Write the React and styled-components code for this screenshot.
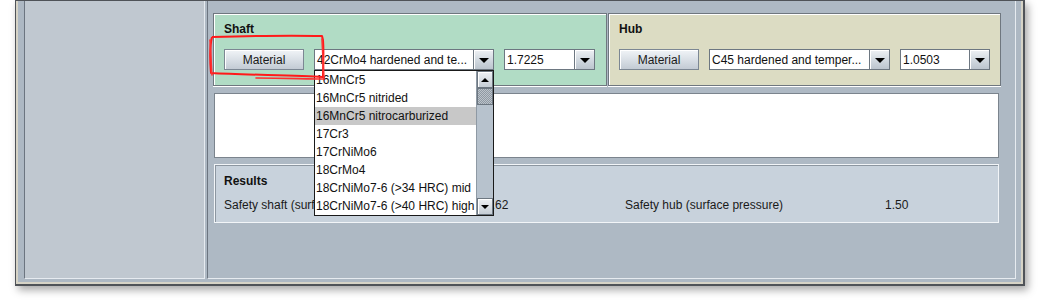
import React from "react";
import styled, { createGlobalStyle } from "styled-components";

const GlobalStyle = createGlobalStyle`
  html, body {
    margin: 0;
    padding: 0;
    background: #ffffff;
  }
  body {
    font-family: "Liberation Sans", Arial, sans-serif;
    font-size: 12px;
    color: #111;
  }
`;

const materials = [
  "16MnCr5",
  "16MnCr5 nitrided",
  "16MnCr5 nitrocarburized",
  "17Cr3",
  "17CrNiMo6",
  "18CrMo4",
  "18CrNiMo7-6 (>34 HRC) mid",
  "18CrNiMo7-6 (>40 HRC) high",
];

export default function App() {
  return (
    <>
      <GlobalStyle />
      <Stage>
        <Window>
          <Frame>
            <SidePanel />
            <MainArea>
              <PartsRow>
                <PartPanel $bg="#b1dcc5">
                  <PanelTitle>Shaft</PanelTitle>
                  <ControlRow>
                    <Button>Material</Button>
                    <ComboWrap>
                      <Combo $width={180} value="42CrMo4 hardened and te..." />
                      <Popup>
                        <ItemList>
                          {materials.map((m, i) => (
                            <Item key={m} $selected={i === 2}>
                              {m}
                            </Item>
                          ))}
                        </ItemList>
                        <ScrollBar>
                          <ScrollButton>
                            <UpTriangle />
                          </ScrollButton>
                          <Thumb />
                          <Track />
                          <ScrollButton>
                            <DownTriangle $small />
                          </ScrollButton>
                        </ScrollBar>
                      </Popup>
                    </ComboWrap>
                    <Combo $width={91} value="1.7225" />
                  </ControlRow>
                </PartPanel>
                <PartPanel $bg="#dcdcc3">
                  <PanelTitle>Hub</PanelTitle>
                  <ControlRow>
                    <Button>Material</Button>
                    <Combo $width={181} value="C45 hardened and temper..." />
                    <Combo $width={90} value="1.0503" />
                  </ControlRow>
                </PartPanel>
              </PartsRow>
              <TextBox />
              <ResultsPanel>
                <PanelTitle>Results</PanelTitle>
                <ResultGrid>
                  <ResultLabel>Safety shaft (surface pressure)</ResultLabel>
                  <span>1.62</span>
                  <ResultLabel>Safety hub (surface pressure)</ResultLabel>
                  <span>1.50</span>
                </ResultGrid>
              </ResultsPanel>
            </MainArea>
          </Frame>
          <Annotation viewBox="0 0 130 56" width="130" height="56">
            <path
              d="M6 6 C40 5 80 4 116 5 L117 9 C118 22 117 36 117 46 C90 44 40 44 5 42 C4 30 3 18 6 6"
              fill="none"
              stroke="#ff1a1a"
              strokeWidth="2"
              strokeLinejoin="round"
            />
            <path
              d="M4 9 C5 22 5 34 6 44 M50 47 C80 47 100 48 118 48 L116 8"
              fill="none"
              stroke="#ff3030"
              strokeWidth="1.6"
              strokeLinecap="round"
            />
          </Annotation>
        </Window>
      </Stage>
    </>
  );
}

function Combo({ $width, value }) {
  return (
    <ComboBox $width={$width}>
      <ComboText>{value}</ComboText>
      <ArrowButton>
        <DownTriangle />
      </ArrowButton>
    </ComboBox>
  );
}

const Stage = styled.div`
  width: 1040px;
  height: 302px;
  padding-left: 15px;
  box-sizing: border-box;
  overflow: hidden;
`;

const Window = styled.div`
  position: relative;
  width: 1010px;
  height: 286px;
  box-sizing: border-box;
  border: 1px solid #4f5358;
  border-width: 1px 2px 2px 1px;
  box-shadow: 3px 4px 8px rgba(0, 0, 0, 0.35);
  background: #adb8c3;
`;

const Frame = styled.div`
  display: flex;
  gap: 2px;
  height: 100%;
  box-sizing: border-box;
  border: 2px solid #d6d3c6;
  border-top: none;
  padding: 0 5px 3px 6px;
  background: #adb8c3;
`;

const SidePanel = styled.div`
  width: 182px;
  box-sizing: border-box;
  background: #c0c8d0;
  border-left: 1px solid #6c7580;
  border-right: 1px solid #e6ebf0;
  border-bottom: 1px solid #e6ebf0;
`;

const MainArea = styled.div`
  flex: 1;
  box-sizing: border-box;
  background: #aeb9c4;
  border-left: 1px solid #6c7580;
  border-right: 1px solid #e6ebf0;
  border-bottom: 1px solid #e6ebf0;
  padding: 12px 14px 0 5px;
  display: flex;
  flex-direction: column;
`;

const PartsRow = styled.div`
  display: grid;
  grid-template-columns: 394px 1fr;
  gap: 1px;
  height: 73px;
`;

const PartPanel = styled.div`
  background: ${(p) => p.$bg};
  border: 1px solid #6f777f;
  box-shadow: inset 1px 1px 0 #ffffff, 0 1px 0 #ffffff;
  padding: 8px 10px 0 10px;
  box-sizing: border-box;
`;

const PanelTitle = styled.div`
  font-weight: bold;
  font-size: 12px;
  line-height: 14px;
  color: #111;
`;

const ControlRow = styled.div`
  display: flex;
  align-items: center;
  gap: 10px;
  margin-top: 13px;
`;

const Button = styled.div`
  width: 80px;
  height: 21px;
  box-sizing: border-box;
  border: 1px solid #7c8793;
  background: linear-gradient(#f1f4f7, #dce2e8 45%, #c3cbd4);
  box-shadow: inset 1px 1px 0 #ffffff;
  display: flex;
  align-items: center;
  justify-content: center;
  padding-top: 1px;
  color: #1a1a1a;
`;

const ComboWrap = styled.div`
  position: relative;
`;

const ComboBox = styled.div`
  width: ${(p) => p.$width}px;
  height: 21px;
  display: flex;
  box-sizing: border-box;
  border: 1px solid #6d7781;
  background: #ffffff;
`;

const ComboText = styled.div`
  flex: 1;
  padding: 1px 0 0 2px;
  line-height: 18px;
  white-space: nowrap;
  overflow: hidden;
  color: #111;
`;

const ArrowButton = styled.div`
  width: 20px;
  box-sizing: border-box;
  border-left: 1px solid #6d7781;
  background: linear-gradient(#eef1f4, #d3dae1 50%, #bcc5ce);
  box-shadow: inset 1px 1px 0 #ffffff;
  display: flex;
  align-items: center;
  justify-content: center;
`;

const DownTriangle = styled.div`
  width: 0;
  height: 0;
  border-left: ${(p) => (p.$small ? 4 : 5)}px solid transparent;
  border-right: ${(p) => (p.$small ? 4 : 5)}px solid transparent;
  border-top: ${(p) => (p.$small ? 4 : 5)}px solid #000;
  margin-top: 1px;
`;

const UpTriangle = styled.div`
  width: 0;
  height: 0;
  border-left: 4px solid transparent;
  border-right: 4px solid transparent;
  border-bottom: 4px solid #000;
`;

const Popup = styled.div`
  position: absolute;
  top: 21px;
  left: 0;
  width: 180px;
  height: 146px;
  box-sizing: border-box;
  border: 1px solid #1a1a1a;
  background: #ffffff;
  display: flex;
  z-index: 5;
`;

const ItemList = styled.div`
  flex: 1;
  overflow: hidden;
`;

const Item = styled.div`
  height: 18px;
  line-height: 18px;
  padding-left: 1px;
  white-space: nowrap;
  overflow: hidden;
  background: ${(p) => (p.$selected ? "#c8c8c8" : "transparent")};
  color: #111;
`;

const ScrollBar = styled.div`
  width: 17px;
  display: flex;
  flex-direction: column;
  background: #b7c2cd;
  border-left: 1px solid #8e99a4;
  box-sizing: border-box;
`;

const ScrollButton = styled.div`
  height: 17px;
  box-sizing: border-box;
  border: 1px solid #6d7781;
  background: linear-gradient(#eef1f4, #c5cdd5);
  box-shadow: inset 1px 1px 0 #ffffff;
  display: flex;
  align-items: center;
  justify-content: center;
`;

const Thumb = styled.div`
  height: 17px;
  box-sizing: border-box;
  border: 1px solid #6d7781;
  background: repeating-conic-gradient(#bcc3ca 0 25%, #8f99a3 0 50%) 0 0 / 2px 2px;
`;

const Track = styled.div`
  flex: 1;
  background: #b7c2cd;
`;

const TextBox = styled.div`
  height: 65px;
  margin-top: 7px;
  margin-left: 1px;
  background: #ffffff;
  border: 1px solid #7b848d;
  box-sizing: border-box;
  width: 785px;
`;

const ResultsPanel = styled.div`
  margin-top: 6px;
  margin-left: 1px;
  width: 785px;
  height: 59px;
  box-sizing: border-box;
  background: #c8d2dc;
  border: 1px solid #f2f5f8;
  box-shadow: inset 1px 1px 0 #8c96a0;
  padding: 9px 9px 0 9px;
`;

const ResultGrid = styled.div`
  display: grid;
  grid-template-columns: 261px 140px 260px 1fr;
  margin-top: 10px;
  line-height: 14px;
  color: #1a1a1a;
`;

const ResultLabel = styled.span`
  white-space: nowrap;
`;

const Annotation = styled.svg`
  position: absolute;
  left: 190px;
  top: 30px;
  pointer-events: none;
  z-index: 10;
`;
